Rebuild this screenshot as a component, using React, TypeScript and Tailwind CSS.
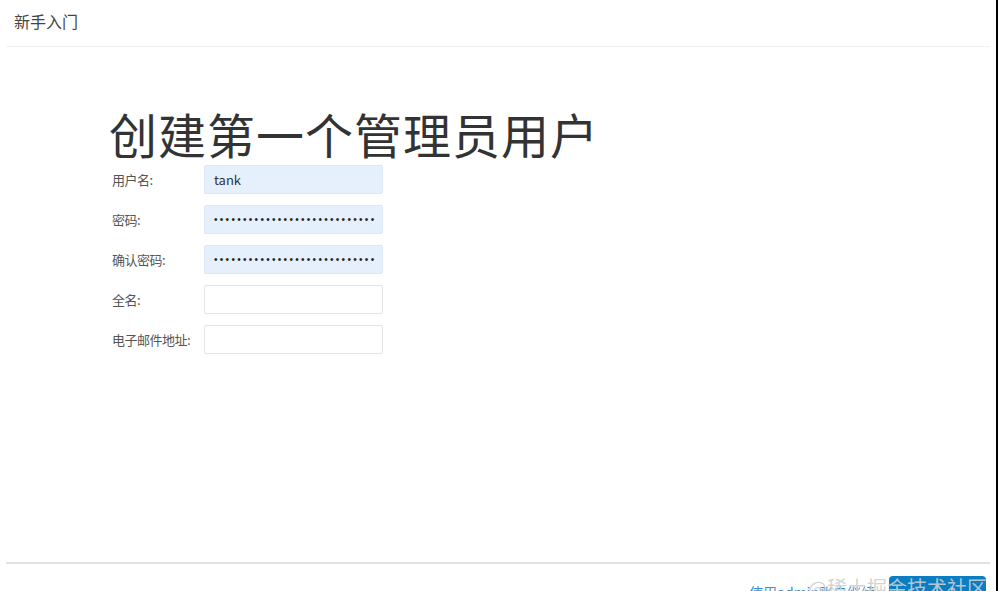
import React from "react";

const font = {
  fontFamily: '"Noto Sans CJK SC", "Noto Sans", "Liberation Sans", sans-serif',
};

const dots = "•".repeat(28);

const fields = [
  { label: "用户名:", value: "tank", masked: false, filled: true },
  { label: "密码:", value: dots, masked: true, filled: true },
  { label: "确认密码:", value: dots, masked: true, filled: true },
  { label: "全名:", value: "", masked: false, filled: false },
  { label: "电子邮件地址:", value: "", masked: false, filled: false },
];

export default function App() {
  return (
    <div className="w-[1000px] h-[591px] overflow-hidden bg-white" style={font}>
      <div className="relative w-[998px] h-[591px] border-r-2 border-black flex flex-col">
        {/* header */}
        <div className="mx-[6px] h-[47px] border-b border-[#f0f0f0] pl-[8px] pt-[9px] text-[16px] leading-[24px] text-[#444]">
          新手入门
        </div>

        {/* form */}
        <div className="flex-1 pl-[109px] pt-[58px]">
          <h1 className="text-[48px] leading-[56px] text-[#333] font-normal tracking-[1px]">
            创建第一个管理员用户
          </h1>
          <div className="flex flex-col gap-[11px] mt-[4px]">
            {fields.map((f) => (
              <div key={f.label} className="flex items-center h-[29px]">
                <label className="w-[95px] pl-[3px] text-[13px] text-[#555] whitespace-nowrap tracking-[-0.5px]">
                  {f.label}
                </label>
                {f.masked ? (
                  <input
                    type="text"
                    readOnly
                    value={f.value}
                    className="w-[179px] h-[29px] rounded-[2px] border border-[#dde8f7] bg-[#e6f0fd] pl-[9px] pr-[4px] text-[10px] tracking-[2.3px] text-[#222] outline-none"
                    style={{ fontFamily: '"Liberation Sans", sans-serif' }}
                  />
                ) : (
                  <input
                    type="text"
                    readOnly
                    value={f.value}
                    className={`w-[179px] h-[29px] rounded-[2px] border px-[9px] text-[13px] text-[#333] outline-none ${
                      f.filled ? "bg-[#e6f0fd] border-[#dde8f7]" : "bg-white border-[#e4e4e4]"
                    }`}
                    style={font}
                  />
                )}
              </div>
            ))}
          </div>
        </div>

        {/* footer */}
        <div className="mx-[6px] h-[29px] border-t-2 border-[#e2e2e2] flex justify-end items-start pt-[12px] pr-[4px] gap-[14px]">
          <span className="text-[14px] leading-[20px] text-[#3a8fd0] mt-[6px] whitespace-nowrap">
            使用admin账户继续
          </span>
          <button className="w-[97px] h-[36px] rounded-[4px] bg-[#0b7dc2] text-white text-[14px] leading-[20px] pt-[6px]">
            保存并完成
          </button>
        </div>

        {/* watermark */}
        <div className="absolute left-[808px] top-[576px] text-[20px] leading-[24px] text-[#cfcfcf]/90 whitespace-nowrap pointer-events-none">
          @稀土掘金技术社区
        </div>
      </div>
    </div>
  );
}
